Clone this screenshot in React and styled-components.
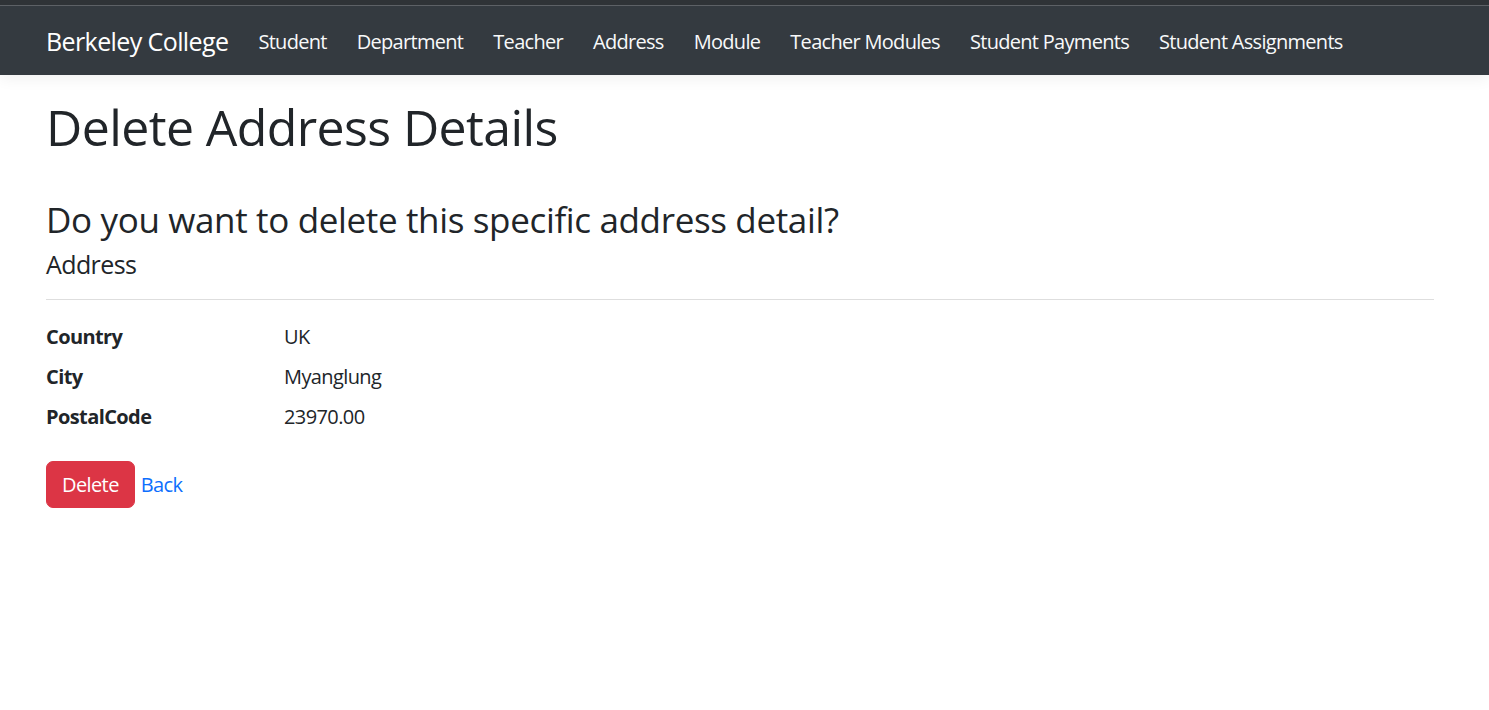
import React from "react";
import styled, { createGlobalStyle } from "styled-components";

const GlobalStyle = createGlobalStyle`
  html, body { margin: 0; padding: 0; background: #fff; }
  body {
    font-family: "Open Sans", "Noto Sans", sans-serif;
    font-size: 20px;
    line-height: 1.5;
    color: #212529;
    letter-spacing: -0.03em;
  }
  * { box-sizing: border-box; }
`;

const Header = styled.header`
  background: #343a40;
  box-shadow: 0 4px 14px rgba(0, 0, 0, 0.06);
  margin-bottom: 20px;
`;

const TopEdge = styled.div`
  height: 6px;
  background: #2f3337;
  border-bottom: 1px solid #5d6166;
`;

const NavBar = styled.nav`
  display: flex;
  align-items: center;
  height: 69px;
  padding: 2px 46px 0;
  gap: 30px;
`;

const Brand = styled.a`
  font-size: 25px;
  color: #fff;
  text-decoration: none;
`;

const NavLink = styled.a`
  font-size: 20px;
  color: #f8f9fa;
  text-decoration: none;
  letter-spacing: -0.035em;
`;

const Main = styled.main`
  padding: 2px 55px 0 46px;
`;

const Title = styled.h1`
  font-size: 50px;
  font-weight: 500;
  line-height: 1.2;
  margin: 0 0 10px;
`;

const Question = styled.h3`
  font-size: 35px;
  font-weight: 500;
  line-height: 1.2;
  letter-spacing: -0.01em;
  margin: 42px 0 8px;
`;

const SectionTitle = styled.h5`
  font-size: 25px;
  font-weight: 500;
  line-height: 1.2;
  margin: 0;
`;

const Rule = styled.hr`
  border: 0;
  border-top: 1px solid #dedede;
  margin: 20px 0 22px;
`;

const DetailList = styled.dl`
  display: grid;
  grid-template-columns: 238px 1fr;
  margin: 0 0 19px;
`;

const Term = styled.dt`
  font-weight: 700;
  margin: 0 0 10px;
`;

const Value = styled.dd`
  margin: 0 0 10px;
`;

const Actions = styled.div`
  display: flex;
  align-items: baseline;
  gap: 6px;
`;

const DangerButton = styled.button`
  font-family: inherit;
  font-size: 20px;
  line-height: 30px;
  letter-spacing: inherit;
  color: #fff;
  background: #dc3545;
  border: 1px solid #dc3545;
  border-radius: 7px;
  padding: 7.5px 15px;
  cursor: pointer;
`;

const BackLink = styled.a`
  color: #0d6efd;
  text-decoration: none;
`;

const navItems = [
  "Student",
  "Department",
  "Teacher",
  "Address",
  "Module",
  "Teacher Modules",
  "Student Payments",
  "Student Assignments",
];

const details = [
  ["Country", "UK"],
  ["City", "Myanglung"],
  ["PostalCode", "23970.00"],
];

export default function App() {
  return (
    <>
      <GlobalStyle />
      <Header>
        <TopEdge />
        <NavBar>
          <Brand href="#">Berkeley College</Brand>
          {navItems.map((n) => (
            <NavLink key={n} href="#">
              {n}
            </NavLink>
          ))}
        </NavBar>
      </Header>
      <Main>
        <Title>Delete Address Details</Title>
        <Question>Do you want to delete this specific address detail?</Question>
        <SectionTitle>Address</SectionTitle>
        <Rule />
        <DetailList>
          {details.map(([k, v]) => (
            <React.Fragment key={k}>
              <Term>{k}</Term>
              <Value>{v}</Value>
            </React.Fragment>
          ))}
        </DetailList>
        <Actions>
          <DangerButton>Delete</DangerButton>
          <BackLink href="#">Back</BackLink>
        </Actions>
      </Main>
    </>
  );
}
